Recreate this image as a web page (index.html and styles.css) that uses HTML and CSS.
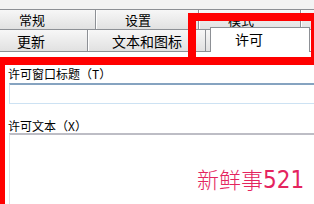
FILE: index.html
```html
<!DOCTYPE html>
<html lang="zh-CN">
<head>
<meta charset="utf-8">
<title>许可</title>
<link rel="stylesheet" href="styles.css">
</head>
<body>
<div class="dialog">
  <div class="tabs">
    <div class="row row-back">
      <div class="tab t-general">常规</div>
      <div class="tab t-settings">设置</div>
      <div class="tab t-mode">模式</div>
      <div class="tab t-more"></div>
    </div>
    <div class="row row-front">
      <div class="tab t-update">更新</div>
      <div class="tab t-text">文本和图标</div>
      <div class="tab t-gap"></div>
      <div class="tab active">许可</div>
      <div class="tab t-rest"></div>
    </div>
  </div>
  <div class="panel">
    <div class="label">许可窗口标题<span class="acc">（T）</span></div>
    <div class="field"></div>
    <div class="label label-2">许可文本<span class="acc">（X）</span></div>
    <div class="area"></div>
  </div>
  <div class="mark mark-tab"></div>
  <div class="mark mark-panel"></div>
  <div class="watermark"><span class="wm-cjk">新鲜事</span><span class="wm-num">521</span></div>
</div>
</body>
</html>
```
FILE: styles.css
```css
html, body {
  margin: 0;
  padding: 0;
}
body {
  width: 314px;
  height: 204px;
  overflow: hidden;
  background: #fff;
  font-family: "Noto Sans CJK SC", sans-serif;
  font-size: 12px;
  color: #000;
}
.dialog {
  position: relative;
  width: 314px;
  height: 204px;
  overflow: hidden;
}
.tabs {
  box-sizing: border-box;
  height: 52px;
  padding-top: 9px;
  background: #f3f3f3;
}
.row {
  display: flex;
}
.tab {
  flex: none;
  box-sizing: border-box;
  border-top: 1px solid #8d9095;
  border-right: 1px solid #8d9095;
  background: linear-gradient(#f7f7f7, #e1e1e1);
  box-shadow: inset 1px 0 0 #fff;
  white-space: nowrap;
}
.row-back {
  height: 20px;
  margin-left: -10px;
}
.row-back .tab {
  height: 20px;
  line-height: 19px;
  padding-left: 29px;
  font-size: 13px;
}
.t-general { width: 106px; }
.t-settings { width: 103px; }
.t-mode { width: 102px; }
.t-more { width: 40px; }
.row-front {
  height: 25px;
  margin-top: -2px;
  margin-left: -10px;
  align-items: flex-end;
}
.row-front .tab {
  height: 23px;
  line-height: 22px;
  font-size: 14px;
  border-bottom: 1px solid #8d9095;
}
.t-update { width: 98px; padding-left: 27px; }
.t-text { width: 118px; padding-left: 24px; }
.row-front .t-gap {
  width: 4px;
  border-right: none;
  box-shadow: none;
}
.row-front .active {
  width: 100px;
  height: 25px;
  line-height: 23px;
  padding-left: 24px;
  border-left: 1px solid #8d9095;
  border-bottom: none;
  background: #fff;
  box-shadow: none;
}
.t-rest { width: 20px; }
.panel {
  padding: 15px 0 0 8px;
  overflow: hidden;
}
.label {
  height: 14px;
  line-height: 14px;
  white-space: nowrap;
}
.label-2 {
  margin-top: 15px;
}
.field {
  box-sizing: border-box;
  margin: 2px 0 0 1px;
  width: 400px;
  height: 21px;
  border: 1px solid #cde2f3;
  border-top: 2px solid #86a3c0;
  background: #fff;
}
.area {
  box-sizing: border-box;
  margin-left: 1px;
  width: 400px;
  height: 100px;
  border: 1px solid #e0e0e8;
  border-top: 2px solid #bdbdc5;
  background: #fff;
}
.mark {
  position: absolute;
  box-sizing: border-box;
  border: 8px solid #f00;
}
.mark-tab {
  left: 188px;
  top: 13px;
  width: 131px;
  height: 52px;
}
.mark-panel {
  left: -3px;
  top: 57px;
  width: 340px;
  height: 200px;
}
.watermark {
  position: absolute;
  left: 197px;
  top: 163px;
  height: 30px;
  line-height: 30px;
  color: #e4245e;
  white-space: nowrap;
}
.wm-cjk {
  font-family: "Noto Sans CJK SC", sans-serif;
  font-weight: 300;
  font-size: 22px;
}
.wm-num {
  font-family: "Liberation Sans Narrow", "DejaVu Sans Condensed", sans-serif;
  font-size: 24px;
}
```
